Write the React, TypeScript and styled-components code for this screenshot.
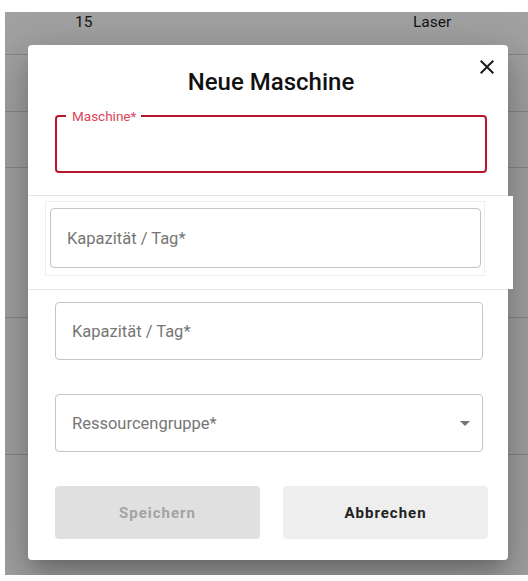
import React from "react";
import styled, { createGlobalStyle } from "styled-components";

const GlobalStyle = createGlobalStyle`
  html, body {
    margin: 0;
    padding: 0;
    background: #ffffff;
    font-family: Roboto, "Liberation Sans", Arial, sans-serif;
  }
`;

const rows = [
  { height: 43, nr: "15", group: "Laser" },
  { height: 57, nr: "", group: "" },
  { height: 56, nr: "", group: "" },
  { height: 150, nr: "", group: "" },
  { height: 137, nr: "", group: "" },
];

const App = () => {
  return (
    <>
      <GlobalStyle />
      <Backdrop>
        <Table>
          {rows.map((row, i) => (
            <TableRow key={i} height={row.height}>
              <Cell width={70} />
              <Cell width={338}>{row.nr}</Cell>
              <Cell>{row.group}</Cell>
            </TableRow>
          ))}
        </Table>
        <Overlay />
        <Dialog>
          <Header>
            <Title>Neue Maschine</Title>
            <CloseButton aria-label="Schließen">
              <svg width="24" height="24" viewBox="0 0 24 24">
                <path
                  fill="#1c1c1c"
                  d="M19 6.41 17.59 5 12 10.59 6.41 5 5 6.41 10.59 12 5 17.59 6.41 19 12 13.41 17.59 19 19 17.59 13.41 12z"
                />
              </svg>
            </CloseButton>
          </Header>

          <Section padding="0 21px 22px 27px">
            <Field focused>
              <NotchLabel>Maschine*</NotchLabel>
            </Field>
          </Section>
          <Divider />

          <ShiftedSection>
            <Ghost>
              <Field tall>
                <Placeholder>Kapazität / Tag*</Placeholder>
              </Field>
            </Ghost>
          </ShiftedSection>
          <Divider />

          <Section padding="12px 25px 18px 27px">
            <Stack>
              <Field>
                <Placeholder>Kapazität / Tag*</Placeholder>
              </Field>
              <Field>
                <Placeholder>Ressourcengruppe*</Placeholder>
                <Arrow />
              </Field>
              <Actions>
                <ActionButton disabled>Speichern</ActionButton>
                <ActionButton>Abbrechen</ActionButton>
              </Actions>
            </Stack>
          </Section>
        </Dialog>
      </Backdrop>
    </>
  );
};

const Backdrop = styled.div`
  position: relative;
  margin: 12px 0 0 5px;
  width: 523px;
  height: 563px;
  overflow: hidden;
  background: #ffffff;
`;

const Table = styled.div`
  display: flex;
  flex-direction: column;
`;

const TableRow = styled.div<{ height: number }>`
  display: flex;
  height: ${(props) => props.height}px;
  border-bottom: 1px solid #d6d6d6;
  font-size: 15.5px;
  color: rgba(0, 0, 0, 0.9);
  padding-top: 1px;
  box-sizing: border-box;
`;

const Cell = styled.div<{ width?: number }>`
  width: ${(props) => (props.width ? `${props.width}px` : "auto")};
  flex: ${(props) => (props.width ? "none" : 1)};
`;

const Overlay = styled.div`
  position: absolute;
  inset: 0;
  background: rgba(0, 0, 0, 0.37);
`;

const Dialog = styled.div`
  position: absolute;
  left: 23px;
  top: 33px;
  width: 480px;
  height: 515px;
  background: #ffffff;
  border-radius: 4px;
  display: flex;
  flex-direction: column;
  box-shadow: 0px 11px 15px -7px rgba(0, 0, 0, 0.2),
    0px 24px 38px 3px rgba(0, 0, 0, 0.14), 0px 9px 46px 8px rgba(0, 0, 0, 0.12);
`;

const Header = styled.div`
  position: relative;
  height: 70px;
  display: flex;
  justify-content: center;
  padding-top: 21px;
  box-sizing: border-box;
`;

const Title = styled.h2`
  margin: 0;
  font-size: 24px;
  font-weight: 500;
  line-height: 32px;
  color: #111111;
  padding-left: 6px;
`;

const CloseButton = styled.button`
  position: absolute;
  right: 9px;
  top: 10px;
  width: 24px;
  height: 24px;
  padding: 0;
  border: none;
  background: none;
  display: flex;
`;

const Section = styled.div<{ padding: string }>`
  padding: ${(props) => props.padding};
`;

const ShiftedSection = styled.div`
  background: #ffffff;
  margin-right: -5px;
  padding: 5px 28px 13px 17px;
`;

const Ghost = styled.div`
  border: 1px solid #efefef;
  padding: 6px 3px 7px 4px;
`;

const Divider = styled.div`
  height: 1px;
  background: #e6e6e6;
`;

const Stack = styled.div`
  display: flex;
  flex-direction: column;
  gap: 34px;
`;

const Field = styled.div<{ focused?: boolean; tall?: boolean }>`
  position: relative;
  height: ${(props) => (props.tall ? 60 : 58)}px;
  box-sizing: border-box;
  border-radius: 4px;
  border: ${(props) =>
    props.focused ? "2px solid #b9162c" : "1px solid #c4c4c4"};
  display: flex;
  align-items: center;
  padding: 0 16px;
`;

const NotchLabel = styled.span`
  position: absolute;
  left: 9px;
  top: -10px;
  padding: 0 5px 0 6px;
  background: #ffffff;
  font-size: 13.5px;
  line-height: 18px;
  color: #dd4458;
`;

const Placeholder = styled.span`
  font-size: 16.5px;
  color: #767676;
  flex: 1;
`;

const Arrow = styled.span`
  width: 0;
  height: 0;
  border-left: 5px solid transparent;
  border-right: 5px solid transparent;
  border-top: 5px solid #757575;
  margin-right: -4px;
`;

const Actions = styled.div`
  display: grid;
  grid-template-columns: 1fr 1fr;
  gap: 23px;
  margin-right: -5px;
`;

const ActionButton = styled.button`
  height: 53px;
  border: none;
  border-radius: 4px;
  font-family: Roboto, "Liberation Sans", Arial, sans-serif;
  font-size: 15px;
  font-weight: 700;
  letter-spacing: 1px;
  background: ${(props) => (props.disabled ? "#e0e0e0" : "#eeeeee")};
  color: ${(props) => (props.disabled ? "#a3a3a3" : "#222222")};
`;

export default App;
